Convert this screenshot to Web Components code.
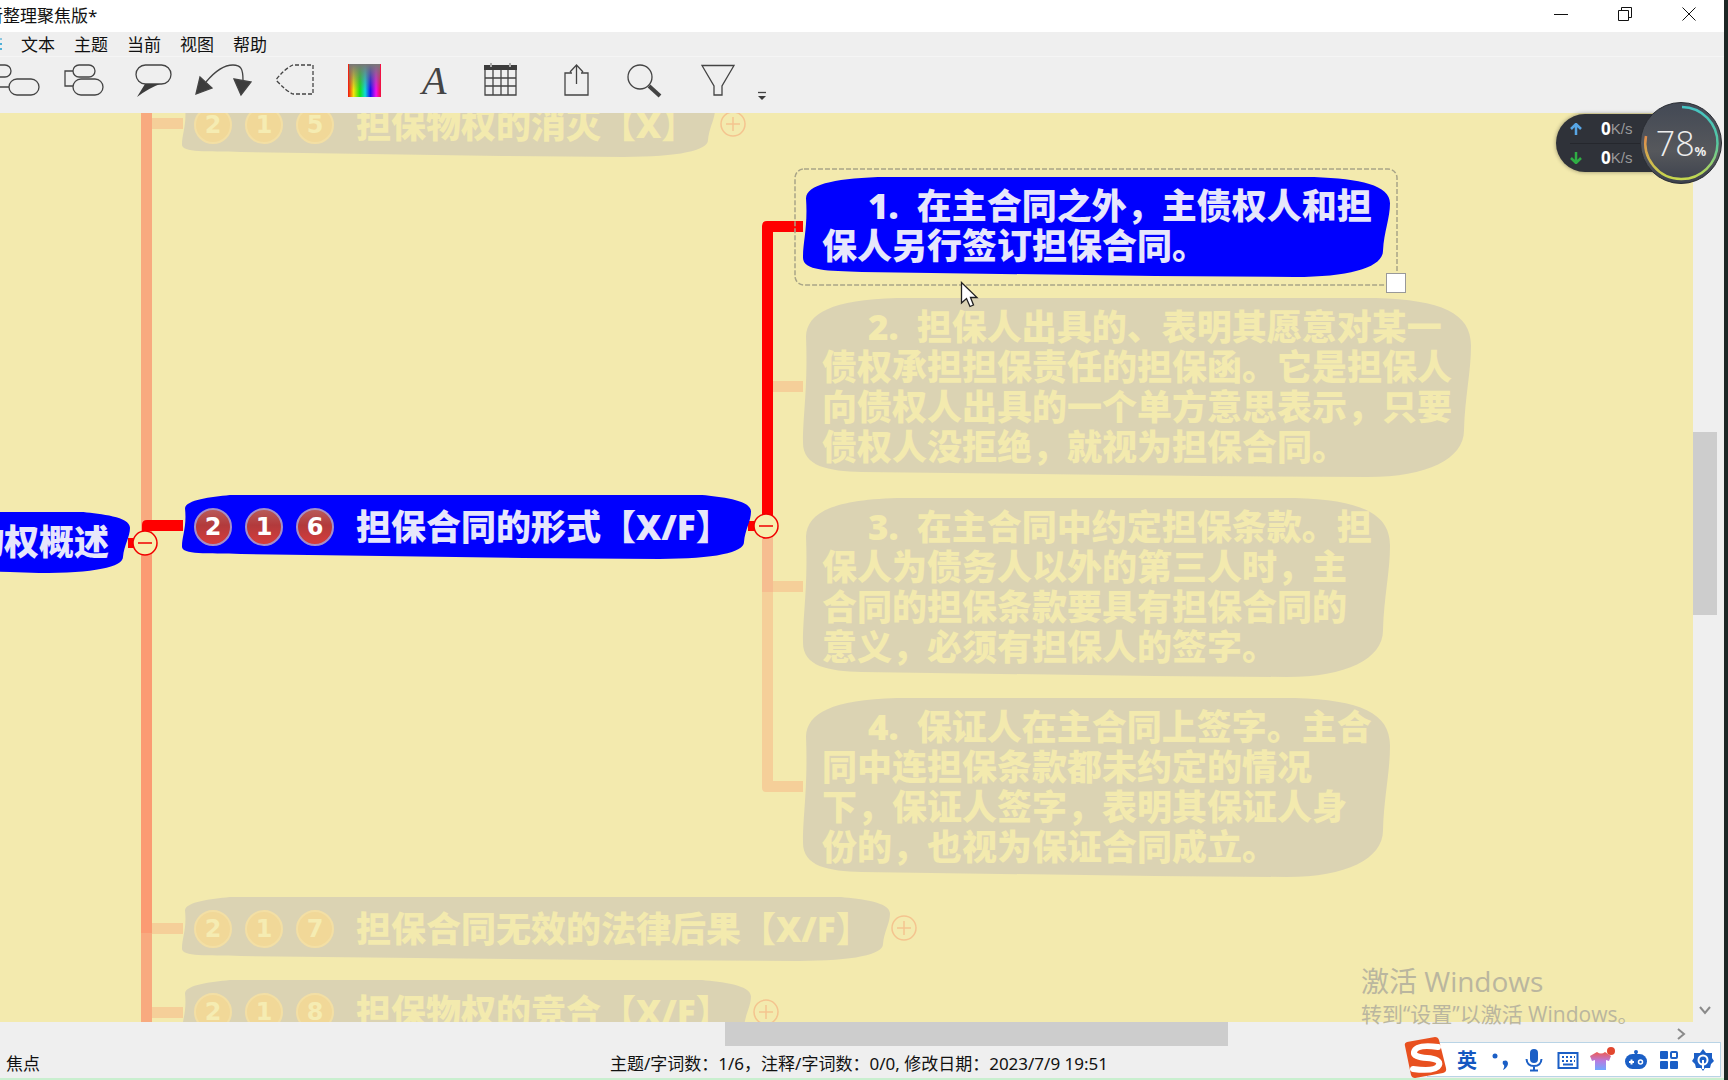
<!DOCTYPE html>
<html lang="zh-CN">
<head>
<meta charset="utf-8">
<title>新整理聚焦版</title>
<style>
  html, body { margin: 0; height: 100%; }
  body { overflow: hidden; background: #1d2725; font-family: "Noto Sans", "Noto Sans CJK SC", sans-serif; }
</style>
</head>
<body>
<mind-app></mind-app>

<script>
const define = (name, html, setup) => {
  const tpl = document.createElement('template');
  tpl.innerHTML = html;
  customElements.define(name, class extends HTMLElement {
    constructor() {
      super();
      this.attachShadow({ mode: 'open' }).append(tpl.content.cloneNode(true));
    }
    connectedCallback() { if (setup) setup(this, this.shadowRoot); }
  });
};

/* ---------- title bar ---------- */
define('title-bar', `
<style>
  :host { display: flex; justify-content: space-between; height: 32px; background: #fff; color: #111; overflow: hidden; }
  h1 { margin: 0 0 0 -14px; font-size: 17px; line-height: 32px; font-weight: 400; }
  nav { display: flex; padding-right: 3px; }
  button { width: 64px; border: 0; padding: 0; background: none; display: grid; place-items: center; }
  svg { width: 16px; height: 16px; fill: none; stroke: #111; margin-bottom: 4px; }
</style>
<h1><slot></slot></h1>
<nav>
  <button aria-label="最小化"><svg viewBox="0 0 16 16"><path d="M1 8.5H15"/></svg></button>
  <button aria-label="还原"><svg viewBox="0 0 16 16"><path d="M1.500 4.500H11.500V14.500H1.500ZM4.500 4.500V1.500H14.500V11.500H11.500"/></svg></button>
  <button aria-label="关闭"><svg viewBox="0 0 16 16"><path d="M1.500 1.500L14.500 14.500M14.500 1.500L1.500 14.500"/></svg></button>
</nav>`);

/* ---------- menu ---------- */
define('menu-bar', `
<style>
  :host { display: flex; gap: 19px; height: 25px; background: #efefef; border-bottom: 1px solid #f5f5f5; box-sizing: border-box; }
  i { width: 2px; height: 12px; margin: 6px 0; background: linear-gradient(#8cc7e0 2px, transparent 2px 5px, #4fb0d8 5px 7px, transparent 7px 10px, #4fb0d8 10px); }
  ::slotted(button) { border: 0; padding: 1px 0 0; background: none; font: 17px/24px "Noto Sans", "Noto Sans CJK SC", sans-serif; color: #111; }
</style>
<i></i><slot></slot>`);

/* ---------- toolbar ---------- */
define('tool-bar', `
<style>
  :host { display: flex; height: 56px; background: #efefef; padding-top: 3px; box-sizing: border-box; overflow: hidden; }
  button { width: 70px; height: 40px; padding: 0; border: 0; background: none; flex: none; }
  button:first-of-type { margin-left: -21px; }
  button:last-of-type { width: 26px; }
  svg { display: block; width: 100%; height: 40px; fill: none; stroke: #444; stroke-width: 1.3; }
  .f { fill: #3c3c3c; }
</style>
<button aria-label="子主题"><svg viewBox="0 0 70 40"><rect x="9" y="5" width="23" height="12" rx="6"/><rect x="30" y="19" width="30" height="16" rx="8"/><path d="M14 11V27H30"/></svg></button>
<button aria-label="同级主题"><svg viewBox="0 0 70 40"><rect x="24" y="5" width="22" height="12" rx="6"/><rect x="24" y="19" width="30" height="16" rx="8"/><path d="M24 11H16V26H24"/></svg></button>
<button aria-label="标注"><svg viewBox="0 0 70 40"><rect x="17" y="5" width="35" height="19" rx="9.500"/><path class="f" stroke="none" d="M18 37L26 24H41Q30 28 18 37Z"/></svg></button>
<button aria-label="联系"><svg viewBox="0 0 70 40"><path d="M17 22C27 10 37 5 44 5C52 5 54 9 54 20"/><path class="f" d="M7 34L11 17L23 28ZM45 19L62 22L52 35Z"/></svg></button>
<button aria-label="外框"><svg viewBox="0 0 70 40"><path stroke-dasharray="4 2" d="M54 5V34H34Q27 31 17 20Q25 9 34 5Z"/></svg></button>
<button aria-label="颜色"><svg viewBox="0 0 70 40">
  <defs>
    <linearGradient id="h"><stop offset="0" stop-color="#f01010"/><stop offset=".17" stop-color="#f3e60a"/><stop offset=".36" stop-color="#17e017"/><stop offset=".52" stop-color="#0fd9d9"/><stop offset=".68" stop-color="#1a10f0"/><stop offset=".85" stop-color="#f010f0"/><stop offset="1" stop-color="#f01030"/></linearGradient>
    <linearGradient id="g" x2="0" y2="1"><stop offset="0" stop-color="#777"/><stop offset=".8" stop-color="#777" stop-opacity="0"/></linearGradient>
  </defs>
  <path stroke="none" fill="url(#h)" d="M19 4H52V37H19Z"/><path stroke="none" fill="url(#g)" d="M20 4H51V37H20Z"/></svg></button>
<button aria-label="字体"><svg viewBox="0 0 70 40"><text x="23" y="34" font-family="Liberation Serif, serif" font-style="italic" font-size="40" fill="#444" stroke="none">A</text></svg></button>
<button aria-label="表格"><svg viewBox="0 0 70 40"><path d="M16 6H47V35H16ZM24 9V35M32 9V35M39 9V35M16 18H47M16 26H47"/><path class="f" stroke="none" d="M15 5H48V10H15Z"/><path stroke="#aaa" stroke-width="2" d="M22 3V7M41 3V7"/></svg></button>
<button aria-label="共享"><svg viewBox="0 0 70 40"><path d="M33 13H26V35H49V13H42M37.500 24V5M31 12L37.500 5L44 12"/></svg></button>
<button aria-label="查找"><svg viewBox="0 0 70 40"><circle cx="31" cy="17" r="12"/><path stroke-width="4" d="M40 26L51 36"/></svg></button>
<button aria-label="筛选"><svg viewBox="0 0 70 40"><path d="M23 5.500H55L43 26V35H35V26Z"/></svg></button>
<button aria-label="更多"><svg viewBox="0 0 26 40"><path d="M9 32.500H17"/><path class="f" stroke="none" d="M9 36H17L13 40Z"/></svg></button>`);

/* ---------- number badge ---------- */
define('num-badge', `
<style>
  :host { display: grid; place-items: center; width: 38px; height: 38px; box-sizing: border-box; border-radius: 50%;
    border: 2px solid var(--badge-ring); background: var(--badge-fill); color: var(--badge-ink); font: 700 24px/34px "DejaVu Sans", sans-serif; }
</style><slot></slot>`);

/* ---------- fold / unfold handle ---------- */
define('fold-toggle', `
<style>
  :host { position: absolute; left: var(--x); top: var(--y); width: 26px; height: 26px; }
  button { width: 26px; height: 26px; padding: 0; border: 0; background: none; }
  svg { display: block; width: 26px; height: 26px; fill: #f7efae; stroke: #f00000; stroke-width: 1.5; }
  :host([plus]) svg { stroke: #f4c48f; fill: none; }
  .v { display: none; } :host([plus]) .v { display: inline; }
</style>
<button aria-label="折叠"><svg viewBox="0 0 26 26"><circle cx="13" cy="13" r="12"/><path d="M6 13H20"/><path class="v" d="M13 6V20"/></svg></button>`);

/* ---------- topic with a hand-drawn outline ---------- */
const outline = (w, h) => {
  const a = h * 0.22, c = Math.min(h * 0.75, 95), d = Math.min(45 + h * 0.1, 65);
  return `M4 ${a} C5 ${a * 0.4} 30 3 ${c} 1 L${w * 0.3} 1 L${w - c} 1 C${w - 30} 3 ${w} ${a * 0.4} ${w} ${h * 0.27}`
    + ` C${w} ${h * 0.42} ${w - 6} ${h * 0.55} ${w - 7} ${h * 0.74} C${w - 7} ${h * 0.9} ${w - d * 0.7} ${h} ${w - d - 40} ${h}`
    + ` L${w * 0.6} ${h - 1} L60 ${h - 5} C25 ${h - 6} 0 ${h * 0.94} 1 ${h * 0.8} C1 ${h * 0.65} 6 ${h * 0.5} 4 ${a} Z`;
};
define('mind-topic', `
<style>
  :host { position: absolute; left: var(--x); top: var(--y); width: var(--w); height: var(--h); color: #f3eaae;
    --fill: #dbd3b3; --badge-fill: #f1d898; --badge-ring: #f3dfa4; --badge-ink: #f5ecb2; }
  :host([active]) { color: #e6e6fb; --fill: #0000fe; --badge-fill: linear-gradient(#b85a58, #b23a3c 45%, #d63c3c); --badge-ring: #a58fc8; --badge-ink: #fff; }
  svg { position: absolute; inset: 0; width: 100%; height: 100%; fill: var(--fill); overflow: visible; }
  .body { position: relative; height: 100%; display: flex; align-items: center; gap: 22px; box-sizing: border-box; padding-left: 13px; }
  .badges { display: flex; gap: 13px; }
  .badges:not(.on) { display: none; }
  p { margin: 0; white-space: pre; font: 800 35px/40px "Open Sans", "Noto Sans", "Noto Sans CJK SC", sans-serif; }
  :host([long]) .body { align-items: flex-start; padding: 10px 0 0 20px; }
  :host([long]) p { text-indent: 46px; white-space: pre-line; }
  :host([root]) .body { justify-content: flex-end; padding-right: 21px; }
</style>
<svg aria-hidden="true"><path/></svg>
<div class="body"><div class="badges"><slot name="badge"></slot></div><p><slot></slot></p></div>`, (el, root) => {
  root.querySelector('path').setAttribute('d', outline(el.offsetWidth, el.offsetHeight));
  if (el.querySelector('num-badge')) root.querySelector('.badges').classList.add('on');
});

/* ---------- map canvas ---------- */
define('mind-canvas', `
<style>
  :host { display: block; position: relative; overflow: hidden; background: #f3eaae; min-width: 0; }
  .lines { position: absolute; left: 0; top: 0; width: 1693px; height: 909px; }
  .sel { position: absolute; left: 794px; top: 55px; width: 604px; height: 118px; fill: none; stroke: #a9a588; stroke-width: 1.5; stroke-dasharray: 5 2; }
  .grip { position: absolute; left: 1386px; top: 160px; width: 20px; height: 20px; box-sizing: border-box; background: #fff; border: 1px solid #999; }
  .cursor { position: absolute; left: 960px; top: 168px; width: 20px; height: 28px; }
</style>
<svg class="lines" viewBox="0 0 1693 909" aria-hidden="true">
  <path fill="#f8aa7f" d="M141 0H152V909H141Z"/><path fill="#fb9b73" d="M141 418H152V820H141Z"/>
  <path fill="#f5cf99" d="M152 5H183V16H152ZM152 810H183V821H152ZM152 894H183V905H152ZM773 268H803V279H773ZM773 468H803V479H773ZM762 479H773V668H803V679H766Q762 679 762 675Z"/>
  <path fill="#f6bd90" d="M762 420H773V479H762Z"/>
  <path fill="red" d="M142 418V412Q142 407 147 407H183V418ZM128 425H140V435H128ZM748 408H760V418H748ZM762 404V113Q762 108 767 108H803V119H773V404Z"/>
</svg>
<slot></slot>
<svg class="sel" aria-hidden="true"><rect x="1" y="1" width="602" height="116" rx="9"/></svg>
<div class="grip"></div>
<svg class="cursor" viewBox="0 0 20 28" aria-hidden="true"><path fill="#fff" stroke="#222" stroke-width="1.300" d="M1.500 1.500V22L6.500 17.500L10 25.500L13.500 24L10.500 16.500H17Z"/></svg>`);

/* ---------- scrollbars ---------- */
define('scroll-rail', `
<style>
  :host { display: grid; background: #efefef; }
  i { background: #cdcdcd; }
  svg { fill: none; stroke: #8a8a8a; stroke-width: 2; width: 12px; height: 12px; place-self: center; }
  :host([dir=v]) { grid-template: 319fr 184fr 383fr 24px / 24px; }
  :host([dir=v]) i { grid-row: 2; } :host([dir=v]) svg { grid-row: 4; }
  :host([dir=h]) { grid-template: 24px / 725fr 503fr 441fr 24px; }
  :host([dir=h]) i { grid-column: 2; } :host([dir=h]) svg { grid-column: 4; transform: rotate(-90deg); }
</style>
<i></i><svg viewBox="0 0 12 12"><path d="M1 3L6 9L11 3"/></svg>`);

/* ---------- status bar ---------- */
define('status-bar', `
<style>
  :host { display: grid; grid-template-columns: 1fr auto 1fr; height: 34px; box-sizing: border-box; padding: 1px 12px 0 6px; background: #efefef; border-bottom: 2px solid #c9efcf;
    font-size: 17px; line-height: 34px; color: #111; white-space: pre; }
</style>
<slot></slot>`);

/* ---------- network monitor ---------- */
define('net-meter', `
<style>
  :host { position: absolute; right: 6px; top: 102px; width: 166px; height: 82px; display: flex; align-items: center; justify-content: space-between; }
  .pill { width: 130px; height: 58px; box-sizing: border-box; padding: 0 0 0 14px; border-radius: 29px; background: #2f3239; box-shadow: 0 0 4px #0006; display: grid; grid-template-rows: 1fr 1fr; }
  .row { display: grid; grid-template-columns: 14px auto auto; justify-content: start; align-items: center; color: #999; font: 15px/28px "Liberation Sans", sans-serif; }
  .row + .row { border-top: 1px solid #25272d; }
  .row svg { width: 12px; height: 12px; fill: none; stroke-width: 2.5; }
  b { color: #fff; font: 700 17px/28px "Noto Sans", sans-serif; padding-left: 17px; }
  .dial { position: absolute; right: 0; top: 0; width: 82px; height: 82px; }
  .dial svg { position: absolute; inset: 0; width: 82px; height: 82px; }
  .val { position: relative; display: flex; align-items: baseline; justify-content: center; color: #eee; font: 300 34px/82px "Open Sans", "Noto Sans", sans-serif; }
  .val small { font: 700 13px/20px "Noto Sans", sans-serif; }
</style>
<div class="pill">
  <div class="row"><svg viewBox="0 0 12 12" stroke="#58a6e6"><path d="M6 12V2M1 6L6 1L11 6"/></svg><b>0</b><span>K/s</span></div>
  <div class="row"><svg viewBox="0 0 12 12" stroke="#2fae44"><path d="M6 0V10M1 6L6 11L11 6"/></svg><b>0</b><span>K/s</span></div>
</div>
<div class="dial">
  <svg viewBox="0 0 82 82" fill="none"><defs>
    <linearGradient id="d" x2="0" y2="1"><stop offset="0" stop-color="#434955"/><stop offset=".6" stop-color="#56585c"/><stop offset="1" stop-color="#3c414d"/></linearGradient>
    <linearGradient id="r" x2="0" y2="1"><stop offset="0" stop-color="#45c4c4"/><stop offset=".5" stop-color="#55c7a0"/><stop offset="1" stop-color="#c6d84e"/></linearGradient>
    <linearGradient id="l" x2="0" y2="1"><stop offset="0" stop-color="#e08b4c"/><stop offset="1" stop-color="#c6d84e"/></linearGradient></defs>
    <circle cx="41" cy="41" r="40.500" fill="url(#d)" stroke="#2a2d33"/>
    <path stroke="url(#r)" stroke-width="2.500" d="M42 5A36 36 0 0 1 41 77"/><path stroke="url(#l)" stroke-width="2.500" d="M41 77A36 36 0 0 1 6 34"/></svg>
  <div class="val"><span>78</span><small>%</small></div>
</div>`);

/* ---------- activation watermark ---------- */
define('activate-mark', `
<style>
  :host { position: absolute; right: 92px; bottom: 51px; width: 275px; color: #bab69f; white-space: nowrap; pointer-events: none; }
  div { font: 400 28px/36px "Open Sans", "Noto Sans CJK SC", sans-serif; }
  div + div { font-size: 21px; line-height: 30px; }
</style>
<div>激活 Windows</div><div>转到“设置”以激活 Windows。</div>`);

/* ---------- input method bar ---------- */
define('ime-bar', `
<style>
  :host { position: absolute; right: 7px; bottom: 3px; width: 294px; height: 35px; box-sizing: border-box; padding-left: 22px; background: #fff; border: 1px solid #b9d4e6;
    display: grid; grid-template-columns: repeat(8, 1fr); }
  button { border: 0; padding: 0; background: none; display: grid; place-items: center; color: #1557c0; font: 700 20px/32px "Noto Sans CJK SC", sans-serif; }
  button svg { width: 26px; height: 26px; fill: #1b5fc6; }
  .logo { position: absolute; left: -25px; top: -7px; width: 46px; height: 44px; }
</style>
<svg class="logo" viewBox="0 0 46 44" aria-label="搜狗"><path fill="#e8501f" d="M4 6Q1 7 2 10L8 39Q9 42 12 42L40 37Q44 36 43 32L36 4Q35 1 32 1Z"/><path fill="none" stroke="#fff" stroke-width="6" stroke-linecap="round" d="M35 11Q13 8 11 16Q10 21 24 22Q38 23 36 29Q33 36 10 33"/></svg>
<button>英</button>
<button aria-label="标点"><svg viewBox="0 0 26 26"><circle cx="7" cy="9" r="2.500"/><path d="M15 14Q20 12 20 17Q19 21 15 23Q17 20 16 18Q14 17 15 14Z"/></svg></button>
<button aria-label="语音"><svg viewBox="0 0 26 26"><rect x="9" y="2" width="8" height="14" rx="4"/><path fill="none" stroke="#1b5fc6" stroke-width="2" d="M5.500 12Q6 19 13 19Q20 19 20.500 12M13 19V24M9 23.500H17"/></svg></button>
<button aria-label="软键盘"><svg viewBox="0 0 26 26"><path fill="none" stroke="#1b5fc6" stroke-width="2" d="M3.500 6H22.500V21H3.500Z"/><path fill="none" stroke="#1b5fc6" stroke-width="2" stroke-dasharray="2 2" d="M7 10H20M7 14H20"/><path d="M8 16.500H18V18.500H8Z"/></svg></button>
<button aria-label="皮肤"><svg viewBox="0 0 26 26"><defs><linearGradient id="s" x2="0" y2="1"><stop offset="0" stop-color="#ef5a50"/><stop offset=".5" stop-color="#b77be0"/><stop offset="1" stop-color="#6fa8ff"/></linearGradient></defs><path fill="url(#s)" d="M8 5Q12 8 16 5L22 9L20 14L17 13V23H6V13L3 14L1 9Z"/><circle cx="22" cy="4" r="4" fill="#e2472f"/></svg></button>
<button aria-label="智能助手"><svg viewBox="0 0 26 26"><path d="M12 4H14V8H12Z"/><rect x="2" y="7" width="22" height="15" rx="7.500"/><circle cx="13" cy="5" r="2"/><path stroke="#fff" stroke-width="2" d="M6 15H11M8.500 12.500V17.500"/><circle cx="17.500" cy="15" r="2" fill="none" stroke="#fff" stroke-width="1.500"/></svg></button>
<button aria-label="工具箱"><svg viewBox="0 0 26 26"><rect x="4" y="4" width="8" height="8" rx="1"/><rect x="4" y="14" width="8" height="8" rx="1"/><rect x="14" y="14" width="8" height="8" rx="1"/><rect x="15" y="5" width="6" height="6" rx="1" fill="none" stroke="#1b5fc6" stroke-width="2"/></svg></button>
<button aria-label="设置"><svg viewBox="0 0 26 26"><path d="M13 2L16 6H22V11L24 14L21 17L20 21H15L13 24L11 21H6L5 17L2 14L4 11V6H10Z"/><circle cx="13" cy="13" r="4.500" fill="none" stroke="#fff" stroke-width="2"/><path fill="#fff" d="M12 13H14V22H12Z"/></svg></button>`);

/* ---------- whole window ---------- */
define('mind-app', `
<style>
  :host { display: block; height: 100vh; position: relative; }
  .win { height: 100%; margin-right: 4px; display: flex; flex-direction: column; background: #efefef; box-sizing: border-box; }
  .work { flex: 1; min-height: 0; display: grid; grid-template: 1fr 24px / 1fr 31px; }
</style>
<div class="win">
  <title-bar>新整理聚焦版*</title-bar>
  <menu-bar><button>文本</button><button>主题</button><button>当前</button><button>视图</button><button>帮助</button></menu-bar>
  <tool-bar></tool-bar>
  <div class="work">
    <mind-canvas>
      <mind-topic style="--x:181px;--y:-21px;--w:534px;--h:65px"><num-badge slot="badge">2</num-badge><num-badge slot="badge">1</num-badge><num-badge slot="badge">5</num-badge>担保物权的消灭【X】</mind-topic>
      <mind-topic active style="--x:181px;--y:381px;--w:570px;--h:65px"><num-badge slot="badge">2</num-badge><num-badge slot="badge">1</num-badge><num-badge slot="badge">6</num-badge>担保合同的形式【X/F】</mind-topic>
      <mind-topic style="--x:181px;--y:783px;--w:709px;--h:65px"><num-badge slot="badge">2</num-badge><num-badge slot="badge">1</num-badge><num-badge slot="badge">7</num-badge>担保合同无效的法律后果【X/F】</mind-topic>
      <mind-topic style="--x:181px;--y:866px;--w:570px;--h:65px"><num-badge slot="badge">2</num-badge><num-badge slot="badge">1</num-badge><num-badge slot="badge">8</num-badge>担保物权的竞合【X/F】</mind-topic>
      <mind-topic active root style="--x:-170px;--y:398px;--w:300px;--h:62px">物权概述</mind-topic>
      <mind-topic active long style="--x:802px;--y:63px;--w:588px;--h:101px">1.&nbsp; 在主合同之外，主债权人和担<br>保人另行签订担保合同。</mind-topic>
      <mind-topic long style="--x:802px;--y:184px;--w:669px;--h:180px">2.&nbsp; 担保人出具的、表明其愿意对某一<br>债权承担担保责任的担保函。它是担保人<br>向债权人出具的一个单方意思表示，只要<br>债权人没拒绝，就视为担保合同。</mind-topic>
      <mind-topic long style="--x:802px;--y:384px;--w:588px;--h:180px">3.&nbsp; 在主合同中约定担保条款。担<br>保人为债务人以外的第三人时，主<br>合同的担保条款要具有担保合同的<br>意义，必须有担保人的签字。</mind-topic>
      <mind-topic long style="--x:802px;--y:584px;--w:588px;--h:180px">4.&nbsp; 保证人在主合同上签字。主合<br>同中连担保条款都未约定的情况<br>下，保证人签字，表明其保证人身<br>份的，也视为保证合同成立。</mind-topic>
      <fold-toggle style="--x:132px;--y:417px"></fold-toggle>
      <fold-toggle style="--x:753px;--y:400px"></fold-toggle>
      <fold-toggle plus style="--x:720px;--y:-2px"></fold-toggle>
      <fold-toggle plus style="--x:891px;--y:802px"></fold-toggle>
      <fold-toggle plus style="--x:753px;--y:886px"></fold-toggle>
    </mind-canvas>
    <scroll-rail dir="v"></scroll-rail>
    <scroll-rail dir="h"></scroll-rail>
  </div>
  <status-bar><span>焦点</span><span>主题/字词数：1/6，注释/字词数：0/0, 修改日期：2023/7/9 19:51</span></status-bar>
</div>
<net-meter></net-meter>
<activate-mark></activate-mark>
<ime-bar></ime-bar>`);
</script>
</body>
</html>
